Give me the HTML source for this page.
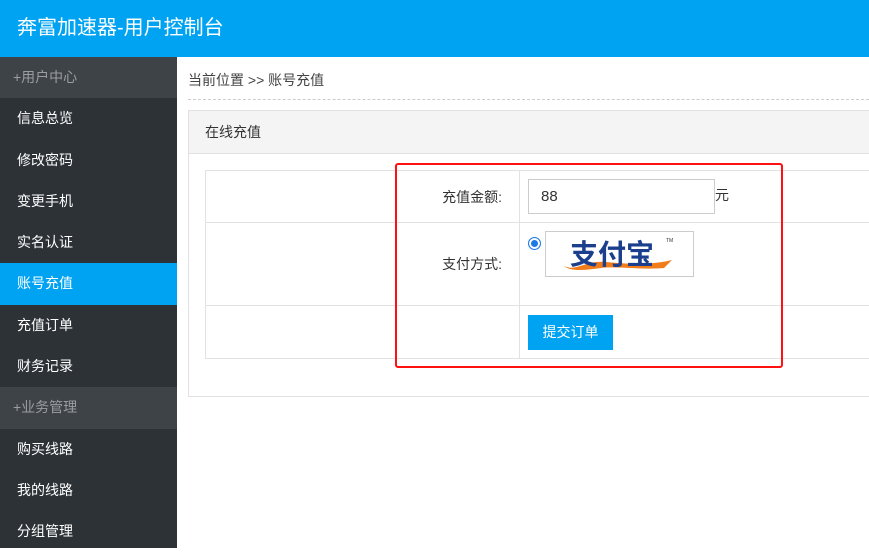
<!DOCTYPE html><html><head><meta charset="utf-8"><style>
*{margin:0;padding:0;box-sizing:border-box}
body{width:869px;height:548px;overflow:hidden;background:#fff;font-family:"Liberation Sans","Noto Sans CJK SC",sans-serif;font-size:14px;color:#333;position:relative}
.hd{position:absolute;left:0;top:0;width:869px;height:57px;background:#00a3f2;color:#fff;font-size:20px;line-height:57px;padding-left:17px}
.sb{position:absolute;left:0;top:57px;width:177px;height:491px;background:#2d3237}
.sb div{height:41.3px;line-height:41px;padding-left:17px;color:#fff;font-size:14px}
.sb .g{background:#3e4347;color:#9a9ea2;padding-left:13px}
.sb .a{background:#00a3f2}
.bc{position:absolute;left:188px;top:70px;font-size:14px;color:#444}
.dl{position:absolute;left:188px;top:99px;width:681px;border-top:1px dashed #ccc}
.pn{position:absolute;left:188px;top:110px;width:690px;height:287px;border:1px solid #e2e2e2}
.ph{height:43px;background:#f4f4f4;border-bottom:1px solid #e2e2e2;line-height:43px;padding-left:16px;font-size:14px}
table{position:absolute;left:205px;top:170px;width:680px;border-collapse:collapse}
td{border:1px solid #e2e2e2;font-size:14px}
td.l{width:314px;text-align:right;padding-right:17px}
td.r{padding-left:8px}
.in{display:inline-block;width:187px;height:35px;border:1px solid #ccc;line-height:33px;padding-left:12px;font-size:15px;vertical-align:middle}
.btn{display:inline-block;width:85px;height:35px;background:#00a3f2;color:#fff;line-height:35px;text-align:center}
.red{position:absolute;left:395px;top:163px;width:388px;height:205px;border:2px solid #f11;border-radius:3px}
</style></head><body>
<div class="hd">奔富加速器-用户控制台</div>
<div class="sb">
<div class="g">+用户中心</div><div>信息总览</div><div>修改密码</div><div>变更手机</div><div>实名认证</div><div class="a">账号充值</div><div>充值订单</div><div>财务记录</div><div class="g">+业务管理</div><div>购买线路</div><div>我的线路</div><div>分组管理</div>
</div>
<div class="bc">当前位置 &gt;&gt; 账号充值</div>
<div class="dl"></div>
<div class="pn"><div class="ph">在线充值</div></div>
<table>
<tr style="height:52px"><td class="l">充值金额:</td><td class="r"><span class="in">88</span>元</td></tr>
<tr style="height:83px"><td class="l">支付方式:</td><td class="r" style="vertical-align:top;padding-top:8px">
<span style="display:inline-block;width:13px;height:13px;border-radius:50%;border:1px solid #1e78e6;background:#1e78e6;box-shadow:inset 0 0 0 2px #fff;vertical-align:top;margin-top:6px;margin-right:4px"></span><span style="display:inline-block;width:149px;height:46px;border:1px solid #ccc;vertical-align:top;position:relative">
<svg width="147" height="44" viewBox="0 0 147 44"><path d="M18 34 C30 40 40 28 60 30 C90 33 110 32 126 28 L118 36 C95 38 70 34 55 36 C40 38 25 40 18 34Z" fill="#f07d1a"/><text x="24" y="32" font-size="28" font-weight="bold" fill="#1b3f8c" font-family="Noto Sans CJK SC,sans-serif">支付宝</text><text x="120" y="10" font-size="5" fill="#333">TM</text></svg></span></td></tr>
<tr style="height:53px"><td class="l"></td><td class="r"><span class="btn">提交订单</span></td></tr>
</table>
<div class="red"></div>
</body></html>
